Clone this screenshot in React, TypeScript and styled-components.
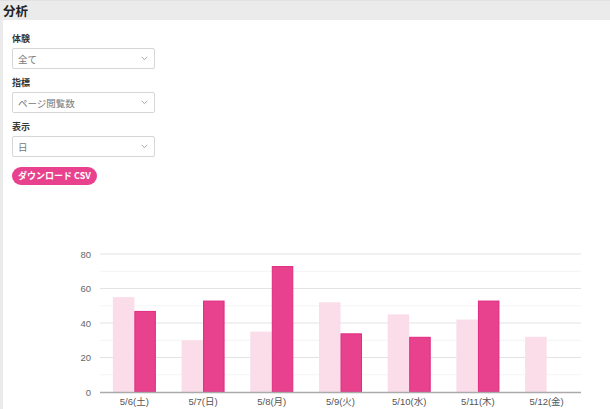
import React from "react"
import styled, { createGlobalStyle } from "styled-components"

const GlobalStyle = createGlobalStyle`
  html, body {
    margin: 0;
    padding: 0;
    background: #ebebeb;
  }
  body {
    font-family: "Noto Sans CJK JP", "Noto Sans", sans-serif;
    color: #333;
  }
`

const PINK = "#e8418e"
const PINK_EDGE = "#df2a7f"
const PINK_LIGHT = "#fadde9"

const Page = styled.div`
  width: 610px;
  height: 409px;
  display: flex;
  flex-direction: column;
  overflow: hidden;
`

const TopBar = styled.header`
  height: 20px;
  flex: none;
  display: flex;
  align-items: center;
  padding-left: 3px;
  background: #ebebeb;
  border-top: 1px solid #e2e2e2;
  box-sizing: border-box;
  font-size: 12.5px;
  font-weight: 700;
  color: #222;
`

const Main = styled.main`
  flex: 1;
  margin-left: 3px;
  background: #fff;
  display: flex;
  flex-direction: column;
`

const Filters = styled.section`
  padding: 13px 0 0 9px;
  display: flex;
  flex-direction: column;
  gap: 8px;
`

const Field = styled.div`
  display: flex;
  flex-direction: column;
  gap: 3px;
`

const Label = styled.label`
  font-size: 9px;
  line-height: 12px;
  font-weight: 700;
  color: #333;
`

const SelectBox = styled.div`
  width: 143px;
  height: 21px;
  box-sizing: border-box;
  border: 1px solid #d6d6d6;
  border-radius: 2px;
  display: flex;
  align-items: center;
  justify-content: space-between;
  padding: 0 6px 0 5px;
  font-size: 9.5px;
  color: #777;
`

const DownloadButton = styled.button`
  align-self: flex-start;
  margin-top: 2px;
  height: 18px;
  padding: 0 6px;
  border: none;
  border-radius: 9px;
  background: ${PINK};
  color: #fff;
  font-family: inherit;
  font-size: 9px;
  font-weight: 700;
  line-height: 18px;
  cursor: pointer;
`

const ChartWrap = styled.div`
  margin-top: 55px;
  height: 169px;
`

const Chevron = () => (
  <svg width="7" height="5" viewBox="0 0 7 5">
    <path d="M0.8 1 L3.5 3.6 L6.2 1" fill="none" stroke="#999" strokeWidth="0.9" />
  </svg>
)

const Select = ({ value }: { value: string }) => (
  <SelectBox>
    <span>{value}</span>
    <Chevron />
  </SelectBox>
)

type Day = { label: string; prev: number; curr: number }

const days: Day[] = [
  { label: "5/6(土)", prev: 55, curr: 47 },
  { label: "5/7(日)", prev: 30, curr: 53 },
  { label: "5/8(月)", prev: 35, curr: 73 },
  { label: "5/9(火)", prev: 52, curr: 34 },
  { label: "5/10(水)", prev: 45, curr: 32 },
  { label: "5/11(木)", prev: 42, curr: 53 },
  { label: "5/12(金)", prev: 32, curr: 0 },
]

// plot area in svg coordinates
const LEFT = 97
const RIGHT = 578
const BASE = 152
const MAX = 80
const TOP = 14
const unit = (BASE - TOP) / MAX
const slot = (RIGHT - LEFT) / days.length
const barW = 21.5

const BarChart = () => (
  <svg width="607" height="169" viewBox="0 0 607 169">
    {[10, 30, 50, 70].map(v => (
      <line key={v} x1={LEFT} x2={RIGHT} y1={BASE - v * unit} y2={BASE - v * unit} stroke="#f4f4f4" strokeWidth="1" />
    ))}
    {[20, 40, 60, 80].map(v => (
      <line key={v} x1={LEFT} x2={RIGHT} y1={BASE - v * unit} y2={BASE - v * unit} stroke="#e3e3e3" strokeWidth="1" />
    ))}
    {[0, 20, 40, 60, 80].map(v => (
      <text
        key={v}
        x={88}
        y={BASE - v * unit + 3.5}
        textAnchor="end"
        fontSize="9.5"
        fill="#666"
        fontFamily="'Liberation Sans', Arial, sans-serif"
      >
        {v}
      </text>
    ))}
    {days.map((d, i) => {
      const cx = LEFT + slot * (i + 0.5)
      return (
        <g key={d.label}>
          {d.prev > 0 && (
            <rect x={cx - barW} y={BASE - d.prev * unit} width={barW} height={d.prev * unit} fill={PINK_LIGHT} />
          )}
          {d.curr > 0 && (
            <rect
              x={cx + 0.5}
              y={BASE - d.curr * unit + 0.5}
              width={barW - 1}
              height={d.curr * unit - 0.5}
              fill={PINK}
              stroke={PINK_EDGE}
              strokeWidth="1"
            />
          )}
          <text
            x={cx}
            y={165}
            textAnchor="middle"
            fontSize="9.5"
            fill="#555"
            fontFamily="'Liberation Sans', 'Noto Sans CJK JP', sans-serif"
          >
            {d.label}
          </text>
        </g>
      )
    })}
    <line x1={LEFT} x2={RIGHT} y1={BASE + 0.5} y2={BASE + 0.5} stroke="#aaa" strokeWidth="1.5" />
  </svg>
)

export default function App() {
  return (
    <Page>
      <GlobalStyle />
      <TopBar>分析</TopBar>
      <Main>
        <Filters>
          <Field>
            <Label>体験</Label>
            <Select value="全て" />
          </Field>
          <Field>
            <Label>指標</Label>
            <Select value="ページ閲覧数" />
          </Field>
          <Field>
            <Label>表示</Label>
            <Select value="日" />
          </Field>
          <DownloadButton>ダウンロード CSV</DownloadButton>
        </Filters>
        <ChartWrap>
          <BarChart />
        </ChartWrap>
      </Main>
    </Page>
  )
}
